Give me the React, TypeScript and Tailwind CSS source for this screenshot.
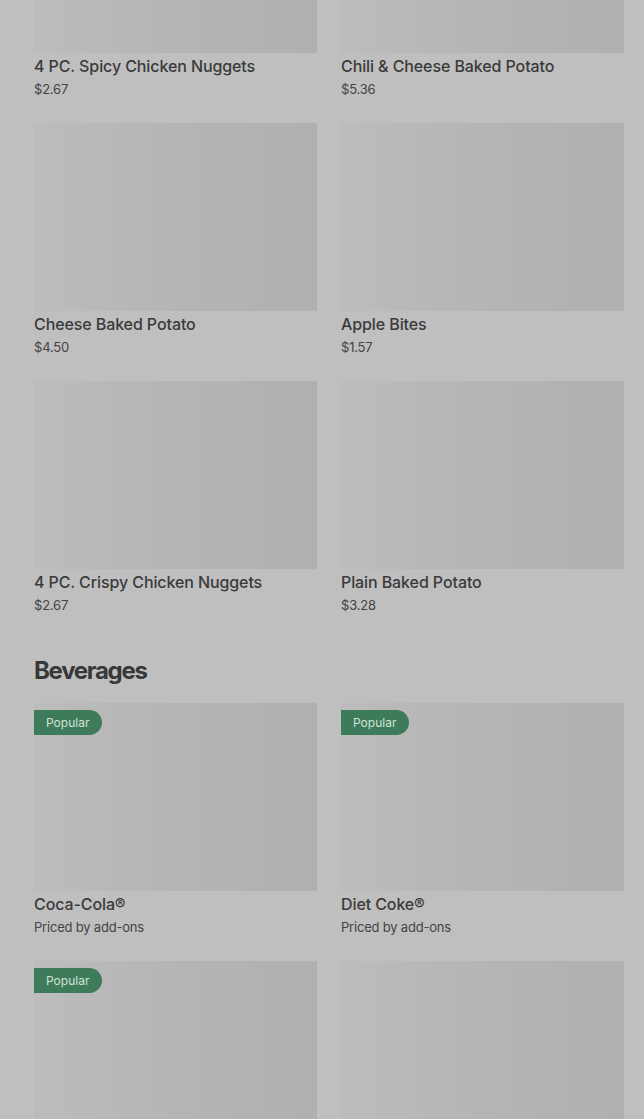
import React from "react";

type Item = { name: string; price: string; popular?: boolean };

const sides: Item[] = [
  { name: "4 PC. Spicy Chicken Nuggets", price: "$2.67" },
  { name: "Chili & Cheese Baked Potato", price: "$5.36" },
  { name: "Cheese Baked Potato", price: "$4.50" },
  { name: "Apple Bites", price: "$1.57" },
  { name: "4 PC. Crispy Chicken Nuggets", price: "$2.67" },
  { name: "Plain Baked Potato", price: "$3.28" },
];

const beverages: Item[] = [
  { name: "Coca-Cola®", price: "Priced by add-ons", popular: true },
  { name: "Diet Coke®", price: "Priced by add-ons", popular: true },
  { name: "Sprite®", price: "Priced by add-ons", popular: true },
  { name: "Fanta® Orange", price: "Priced by add-ons" },
];

const Card = ({ item }: { item: Item }) => (
  <div className="flex flex-col">
    <div className="relative h-[188px] bg-gradient-to-r from-[#bcbcbc] via-[#b5b5b5] to-[#b0b0b0]">
      {item.popular && (
        <span className="absolute left-0 top-[7px] h-[25px] pl-3 pr-[13px] flex items-center rounded-r-full bg-[#3e7b5b] text-[12px] text-[#d2e2d8]">
          Popular
        </span>
      )}
    </div>
    <p className="mt-[2px] text-[16px] leading-[22px] font-medium tracking-[-0.1px] text-[#3a3a3a]">{item.name}</p>
    <p className="mt-[3px] text-[13px] leading-[18px] tracking-[-0.2px] text-[#444444]">{item.price}</p>
  </div>
);

const App = () => {
  return (
    <div
      className="h-[1119px] overflow-hidden bg-[#bfbfbf] pl-[34px] pr-[20px]"
      style={{ fontFamily: "Inter, 'Noto Sans', sans-serif" }}
    >
      <div className="-mt-[135px]">
        <div className="grid grid-cols-2 gap-x-6 gap-y-[25px]">
          {sides.map((item) => (
            <Card key={item.name} item={item} />
          ))}
        </div>

        <h2 className="mt-[41px] mb-[16px] text-[24px] leading-[32px] font-bold tracking-[-1.3px] text-[#383838]">
          Beverages
        </h2>

        <div className="grid grid-cols-2 gap-x-6 gap-y-[25px]">
          {beverages.map((item) => (
            <Card key={item.name} item={item} />
          ))}
        </div>
      </div>
    </div>
  );
};

export default App;
